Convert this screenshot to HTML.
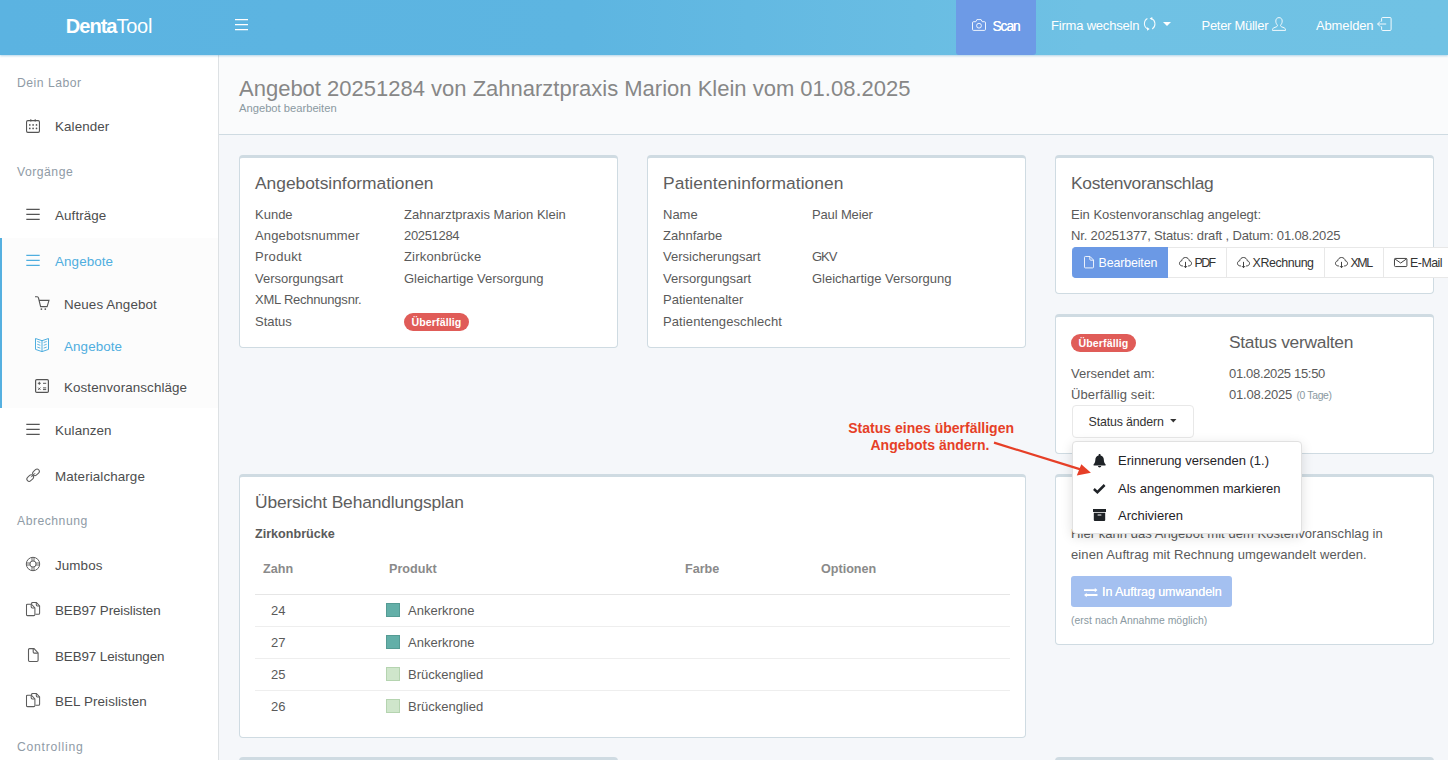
<!DOCTYPE html>
<html lang="de">
<head>
<meta charset="utf-8">
<title>DentaTool – Angebot 20251284</title>
<style>
*{box-sizing:border-box;margin:0;padding:0}
html,body{width:1448px;height:760px;overflow:hidden}
body{font-family:"Liberation Sans",sans-serif;font-size:13px;line-height:21.4px;color:#5a5a5a;background:#f5f7fa;position:relative}
svg{display:block;overflow:visible}
.abs{position:absolute}
/* ---------- top bar ---------- */
#top{position:absolute;left:0;top:0;width:1448px;height:55px;background:linear-gradient(to right,#5bb3e1 0%,#5db5e1 40%,#6fc1e4 75%,#70c2e4 100%);box-shadow:0 1px 2px rgba(70,150,200,.4);z-index:20;color:#fff}
#brand{position:absolute;left:0;top:0;width:218px;height:55px;text-align:center;font-size:20px;line-height:53px;letter-spacing:-.25px;white-space:nowrap}
#brand b{font-weight:700;letter-spacing:-1px}
#scan{position:absolute;left:956px;top:0;width:80px;height:55px;background:#6d9ae6;border-radius:0 0 3px 3px}
.tn{position:absolute;top:0;height:55px;line-height:51px;font-size:13px;white-space:nowrap;color:#fff}
#top svg{position:absolute}
/* ---------- sidebar ---------- */
#side{position:absolute;left:0;top:55px;width:219px;height:705px;background:#fff;border-right:1px solid #dde1e4;z-index:10}
.sh{position:absolute;left:17px;font-size:12.2px;color:#8f9ba6;letter-spacing:.5px;line-height:20px;height:20px;white-space:nowrap}
.si{position:absolute;left:0;width:218px;height:22px;line-height:22px;color:#4c4d4e;font-size:13.4px;letter-spacing:.1px;white-space:nowrap}
.si span{position:absolute;left:55px;top:0}
.si.sub span{left:64px}
.si svg{position:absolute;left:26px;top:2px}
.si.sub svg{left:35px}
.si.on{color:#4faedf}
#actbg{position:absolute;left:0;top:183px;width:218px;height:170px;background:#fcfcfc;border-left:2px solid #55b0e0}
/* ---------- main ---------- */
#head{position:absolute;left:219px;top:55px;width:1229px;height:80px;background:#fafbfc;border-bottom:1px solid #cfdbe2}
#head h1{position:absolute;left:20px;top:16px;font-size:22px;line-height:36px;font-weight:400;color:#878787;white-space:nowrap}
#head small{position:absolute;left:20px;top:43.5px;font-size:11.2px;line-height:18px;color:#8a99a1;white-space:nowrap}
.card{position:absolute;background:#fff;border:1px solid #cfdbe2;border-top-width:3px;border-radius:4px}
.ct{position:absolute;left:15px;font-size:17.4px;line-height:26px;color:#5e5e5e;white-space:nowrap;letter-spacing:-.1px}
.row{position:absolute;left:15px;white-space:nowrap;height:21.4px;line-height:21.4px}
.row i{font-style:normal;position:absolute;left:149px;top:0}
.badge{display:inline-block;background:#e05c58;color:#fff;font-weight:700;font-size:10.6px;line-height:18px;height:18px;border-radius:9px;padding:0 7.5px;letter-spacing:.1px;vertical-align:top}
/* buttons */
.bg{position:absolute;left:16px;top:89px;height:31px;display:flex;white-space:nowrap}
.btn{height:31px;line-height:31px;font-size:12.4px;border:1px solid #e8e8e8;border-left-width:0;background:#fff;color:#333;position:relative;white-space:nowrap}
.btn svg{position:absolute}
.btn.pri{background:#6b99e5;border-color:#6b99e5;color:#fff;border-radius:4px 0 0 4px}
.tcol{position:absolute;left:173px;white-space:nowrap;height:21.4px;line-height:21.4px}
.tcol small{font-size:10.4px;color:#8a99a1;letter-spacing:-.35px;margin-left:1px}
#dd{position:absolute;left:1072px;top:441px;width:230px;height:93px;background:#fff;border:1px solid #e1e1e1;border-radius:4px;box-shadow:0 3px 12px rgba(0,0,0,.13);z-index:30;color:#212529}
#dd div{position:absolute;left:45px;font-size:13px;line-height:22px;height:22px;white-space:nowrap;color:#1f2327}
#dd svg{position:absolute;left:20px}
#note{position:absolute;left:799px;top:419.5px;width:215px;text-align:right;font-weight:700;font-size:14px;line-height:17px;color:#e63f27;z-index:31;white-space:nowrap}
#arrow{position:absolute;left:980px;top:430px;z-index:32}
.th{position:absolute;font-weight:700;color:#8a8a8a;top:82.4px;font-size:12.6px;white-space:nowrap;line-height:21.4px}
.tr{position:absolute;left:15px;width:755px;height:32px;border-top:1px solid #eee;line-height:31px}
.tr b{font-weight:400;position:absolute;left:16px}
.tr i{font-style:normal;position:absolute;left:153px}
.tr u{position:absolute;left:131px;top:8px;width:14px;height:14px;display:block;text-decoration:none}
</style>
</head>
<body>

<!-- ================= TOP BAR ================= -->
<div id="top">
  <div id="brand"><b>Denta</b>Tool</div>
  <svg style="left:235px;top:19px" width="13" height="12" viewBox="0 0 13 12"><path d="M0 .6h13M0 5.6h13M0 10.6h13" stroke="#fff" stroke-width="1.15" fill="none"/></svg>
  <div id="scan"></div>
  <!-- camera -->
  <svg style="left:972px;top:19px" width="14" height="12" viewBox="0 0 14 12" fill="none" stroke="#fff" stroke-opacity=".88" stroke-width="1"><path d="M1.6 2.7H3.8L4.9.6H9.1L10.2 2.7H12.4Q13.5 2.7 13.5 3.8V10.3Q13.5 11.4 12.4 11.4H1.6Q.5 11.4.5 10.3V3.8Q.5 2.7 1.6 2.7Z"/><circle cx="7" cy="6.7" r="2.4"/></svg>
  <div class="tn" style="left:992.5px;font-size:13.8px;letter-spacing:-1.1px;line-height:53px;text-shadow:0 0 .5px #fff">Scan</div>
  <div class="tn" style="left:1051px;letter-spacing:-.2px">Firma wechseln</div>
  <!-- sync -->
  <svg style="left:1143px;top:16px" width="14" height="16" viewBox="0 0 14 16" fill="none" stroke="#fff" stroke-opacity=".92" stroke-width="1.05"><path d="M4.4 2.5A5.9 5.9 0 0 0 4.9 13"/><path d="M9.2 13A5.9 5.9 0 0 0 8.4 2.6"/><path d="M4 11.3L6.700000000000001 13.1 4.1 14.7Z" fill="#fff" stroke="none"/><path d="M9.3 .9L6.6 2.4 9.2 4.1Z" fill="#fff" stroke="none"/></svg>
  <svg style="left:1163px;top:22px" width="8" height="4" viewBox="0 0 8 4"><path d="M0 0h8L4 4z" fill="#fff"/></svg>
  <div class="tn" style="left:1201.5px;letter-spacing:-.28px">Peter Müller</div>
  <!-- user -->
  <svg style="left:1272px;top:17px" width="14" height="14" viewBox="0 0 14 14" fill="none" stroke="#fff" stroke-opacity=".9" stroke-width="1"><path d="M7 .6C9 .6 10.2 2.1 10.2 4.1 10.2 6 9.3 7.4 8.6 8 8.4 8.9 8.7 9.4 9.6 9.8L12.3 10.9C13.2 11.3 13.5 11.9 13.5 12.7V13.4H.5V12.7C.5 11.9.8 11.3 1.7 10.9L4.4 9.8C5.3 9.4 5.6 8.9 5.4 8 4.7 7.4 3.8 6 3.8 4.1 3.8 2.1 5 .6 7 .6Z"/></svg>
  <div class="tn" style="left:1316px;letter-spacing:-.14px">Abmelden</div>
  <!-- logout -->
  <svg style="left:1377px;top:17px" width="15" height="14" viewBox="0 0 15 14" fill="none" stroke="#fff" stroke-opacity=".9" stroke-width="1"><path d="M4.6 4.6V1.6Q4.6.5 5.7.5H13Q14.1.5 14.1 1.6V12.4Q14.1 13.5 13 13.5H5.7Q4.6 13.5 4.6 12.4V9.4"/><path d="M.6 7H9.2M3.2 4.4L.6 7 3.2 9.6"/></svg>
</div>

<!-- ================= SIDEBAR ================= -->
<div id="side">
  <div id="actbg"></div>
  <div class="sh" style="top:17.5px">Dein Labor</div>
  <div class="si" style="top:61px">
    <svg style="top:2.6px" width="14" height="14" viewBox="0 0 14 14" fill="none" stroke="#555" stroke-width="1.1"><rect x=".55" y="1.6" width="12.9" height="11.8" rx="1.3"/><path d="M4.8 .2V2.4M9.2 .2V2.4"/><g fill="#555" stroke="none"><circle cx="3.8" cy="5.9" r=".85"/><circle cx="7.1" cy="5.9" r=".85"/><circle cx="10.5" cy="5.9" r=".85"/><circle cx="3.8" cy="9.4" r=".85"/><circle cx="7.1" cy="9.4" r=".85"/><circle cx="10.5" cy="9.4" r=".85"/></g></svg>
    <span>Kalender</span></div>
  <div class="sh" style="top:107px">Vorgänge</div>
  <div class="si" style="top:150px">
    <svg width="14" height="14" viewBox="0 0 14 14"><path d="M.3 2.4H13.7M.3 7.4H13.7M.3 12.3H13.7" stroke="#555" stroke-width="1.25" fill="none"/></svg>
    <span>Aufträge</span></div>
  <div class="si on" style="top:196px">
    <svg width="14" height="14" viewBox="0 0 14 14"><path d="M.3 2.4H13.7M.3 7.4H13.7M.3 12.3H13.7" stroke="#4faedf" stroke-width="1.25" fill="none"/></svg>
    <span>Angebote</span></div>
  <div class="si sub" style="top:239px">
    <svg width="14" height="14" viewBox="0 0 14 14" fill="none" stroke="#555" stroke-width="1.1"><path d="M0 .8H2.2Q3.2.8 3.5 2L5.6 10.6H12.1L14 4.4H4.1"/><g fill="#555" stroke="none"><circle cx="6.4" cy="13.1" r=".9"/><circle cx="10.3" cy="13.1" r=".9"/></g></svg>
    <span>Neues Angebot</span></div>
  <div class="si sub on" style="top:281px">
    <svg width="14" height="14" viewBox="0 0 14 14" fill="none" stroke="#4faedf" stroke-width="1"><path d="M.5 .5L7 2.7 13.5 .5V11.4L7 13.6 .5 11.4ZM7 2.7V13.6"/><path d="M2.3 3.5L5.3 4.5M2.3 6.3L5.3 7.3M2.3 9.1L5.3 10.1M11.7 3.5L8.7 4.5M11.7 6.3L8.7 7.3M11.7 9.1L8.7 10.1" stroke-width=".9"/></svg>
    <span>Angebote</span></div>
  <div class="si sub" style="top:322px">
    <svg width="14" height="14" viewBox="0 0 14 14" fill="none" stroke="#555" stroke-width="1.2"><rect x=".6" y=".6" width="12.8" height="12.8" rx="1.2"/><path d="M2.8 4.3H5.8M4.3 2.8V5.8M8 4.3H11.2M3.2 8.6L5.4 10.8M5.4 8.6L3.2 10.8M8 8.9H11.2M8 10.6H11.2" stroke-width="1"/></svg>
    <span>Kostenvoranschläge</span></div>
  <div class="si" style="top:365px">
    <svg width="14" height="14" viewBox="0 0 14 14"><path d="M.3 2.4H13.7M.3 7.4H13.7M.3 12.3H13.7" stroke="#555" stroke-width="1.25" fill="none"/></svg>
    <span>Kulanzen</span></div>
  <div class="si" style="top:411px">
    <svg width="14" height="14" viewBox="0 0 14 14" fill="none" stroke="#5c5c5c" stroke-width="1"><rect x="-3.7" y="-2.3" width="7.4" height="4.6" rx="2.3" transform="translate(10 4.3) rotate(-43)"/><rect x="-3.7" y="-2.3" width="7.4" height="4.6" rx="2.3" transform="translate(4.2 10.1) rotate(-43)"/><path d="M5.1 9.2L9.1 5.2"/></svg>
    <span>Materialcharge</span></div>
  <div class="sh" style="top:455.5px">Abrechnung</div>
  <div class="si" style="top:500px">
    <svg width="14" height="14" viewBox="0 0 14 14" fill="none" stroke="#5c5c5c" stroke-width="1"><circle cx="7" cy="7" r="6.7"/><circle cx="7" cy="7" r="3.1"/><path d="M6 .6V4.1M8 .6V4.1M6 9.9V13.4M8 9.9V13.4M.6 6H4.1M.6 8H4.1M9.9 6H13.4M9.9 8H13.4" stroke-width=".9"/></svg>
    <span>Jumbos</span></div>
  <div class="si" style="top:545px">
    <svg width="14" height="14" viewBox="0 0 14 14" fill="none" stroke="#5c5c5c" stroke-width="1.05"><path d="M5.6 1.9V1.4Q5.6 .5 6.5 .5H10.4L13.6 3.9V11.2Q13.6 12.2 12.6 12.2H9.4"/><path d="M10.3 .7V2.8Q10.3 3.9 11.4 3.9H13.4"/><path d="M1.5 2.2H5.4L8.9 5.9V12.5Q8.9 13.6 7.8 13.6H1.5Q.5 13.6 .5 12.5V3.3Q.5 2.2 1.5 2.2Z" fill="#fff"/><path d="M5.2 2.4V4.8Q5.2 5.9 6.3 5.9H8.7"/></svg>
    <span style="letter-spacing:-.1px">BEB97 Preislisten</span></div>
  <div class="si" style="top:591px">
    <svg width="14" height="14" viewBox="0 0 14 14" fill="none" stroke="#5c5c5c" stroke-width="1.1"><path d="M3.6 .6H8L12.1 4.9V12.3Q12.1 13.5 10.9 13.5H3.6Q2.5 13.5 2.5 12.3V1.8Q2.5 .6 3.6 .6Z"/><path d="M7.2 .8V3.9Q7.2 5.1 8.4 5.1H11.9"/></svg>
    <span style="letter-spacing:-.1px">BEB97 Leistungen</span></div>
  <div class="si" style="top:636px">
    <svg width="14" height="14" viewBox="0 0 14 14" fill="none" stroke="#5c5c5c" stroke-width="1.05"><path d="M5.6 1.9V1.4Q5.6 .5 6.5 .5H10.4L13.6 3.9V11.2Q13.6 12.2 12.6 12.2H9.4"/><path d="M10.3 .7V2.8Q10.3 3.9 11.4 3.9H13.4"/><path d="M1.5 2.2H5.4L8.9 5.9V12.5Q8.9 13.6 7.8 13.6H1.5Q.5 13.6 .5 12.5V3.3Q.5 2.2 1.5 2.2Z" fill="#fff"/><path d="M5.2 2.4V4.8Q5.2 5.9 6.3 5.9H8.7"/></svg>
    <span>BEL Preislisten</span></div>
  <div class="sh" style="top:681.5px;letter-spacing:.75px">Controlling</div>
</div>

<!-- ================= PAGE HEADING ================= -->
<div id="head">
  <h1>Angebot 20251284 von Zahnarztpraxis Marion Klein vom 01.08.2025</h1>
  <small>Angebot bearbeiten</small>
</div>

<!-- ================= CARD 1 ================= -->
<div class="card" id="c1" style="left:239px;top:155px;width:379px;height:193px">
  <div class="ct" style="top:11.6px;letter-spacing:-.02px">Angebotsinformationen</div>
  <div class="row" style="top:45.6px">Kunde<i>Zahnarztpraxis Marion Klein</i></div>
  <div class="row" style="top:67px"><span style="letter-spacing:.15px">Angebotsnummer</span><i style="letter-spacing:-.33px">20251284</i></div>
  <div class="row" style="top:88.4px"><span style="letter-spacing:.3px">Produkt</span><i style="letter-spacing:.18px">Zirkonbrücke</i></div>
  <div class="row" style="top:109.8px">Versorgungsart<i>Gleichartige Versorgung</i></div>
  <div class="row" style="top:131.2px;letter-spacing:-.23px">XML Rechnungsnr.</div>
  <div class="row" style="top:152.6px">Status<i><span class="badge" style="margin-top:2px">Überfällig</span></i></div>
</div>

<!-- ================= CARD 2 ================= -->
<div class="card" id="c2" style="left:647px;top:155px;width:379px;height:193px">
  <div class="ct" style="top:11.6px;letter-spacing:.08px">Patienteninformationen</div>
  <div class="row" style="top:45.6px">Name<i style="letter-spacing:-.15px">Paul Meier</i></div>
  <div class="row" style="top:67px">Zahnfarbe</div>
  <div class="row" style="top:88.4px">Versicherungsart<i style="letter-spacing:-1px">GKV</i></div>
  <div class="row" style="top:109.8px">Versorgungsart<i>Gleichartige Versorgung</i></div>
  <div class="row" style="top:131.2px">Patientenalter</div>
  <div class="row" style="top:152.6px;letter-spacing:.1px">Patientengeschlecht</div>
</div>

<!-- ================= CARD 3 : Kostenvoranschlag ================= -->
<div class="card" id="c3" style="left:1055px;top:155px;width:379px;height:139px">
  <div class="ct" style="top:11.6px;left:15px;letter-spacing:-.32px">Kostenvoranschlag</div>
  <div class="row" style="top:45.6px;left:15px">Ein Kostenvoranschlag angelegt:</div>
  <div class="row" style="top:67px;left:15px;letter-spacing:-.16px">Nr. 20251377, Status: draft , Datum: 01.08.2025</div>
  <div class="bg">
    <div class="btn pri" style="width:96px;padding-left:26.5px;letter-spacing:-.12px">
      <svg style="left:11.5px;top:8px" width="10.5" height="12.4" viewBox="0 0 11 13" fill="none" stroke="#fff" stroke-opacity=".92" stroke-width="1"><path d="M1.5 .5H6.3L10 4.2V11.5Q10 12.5 9 12.5H1.5Q.5 12.5 .5 11.5V1.5Q.5 .5 1.5 .5Z"/><path d="M6.1 .7V3.4Q6.1 4.4 7.1 4.4H9.8"/></svg>
      Bearbeiten</div>
    <div class="btn" style="width:59px;padding-left:26.5px;letter-spacing:-1.55px">
      <svg style="left:10.5px;top:8.6px" width="13" height="11.2" viewBox="0 0 14 12" fill="none" stroke="#333" stroke-width="1"><path d="M4.3 9.6H3.6C1.9 9.6 .5 8.4 .5 6.8 .5 5.4 1.5 4.3 2.9 4.1 3.2 2 4.9 .5 7 .5 9.100000000000001 .5 10.8 2 11.1 4.1 12.5 4.3 13.5 5.4 13.5 6.8 13.5 8.4 12.1 9.6 10.4 9.6H9.7"/><path d="M7 5.2V11.3M5.2 9.7L7 11.5 8.8 9.7"/></svg>
      PDF</div>
    <div class="btn" style="width:98px;padding-left:25.6px;letter-spacing:-.42px">
      <svg style="left:9.5px;top:8.6px" width="13" height="11.2" viewBox="0 0 14 12" fill="none" stroke="#333" stroke-width="1"><path d="M4.3 9.6H3.6C1.9 9.6 .5 8.4 .5 6.8 .5 5.4 1.5 4.3 2.9 4.1 3.2 2 4.9 .5 7 .5 9.100000000000001 .5 10.8 2 11.1 4.1 12.5 4.3 13.5 5.4 13.5 6.8 13.5 8.4 12.1 9.6 10.4 9.6H9.7"/><path d="M7 5.2V11.3M5.2 9.7L7 11.5 8.8 9.7"/></svg>
      XRechnung</div>
    <div class="btn" style="width:59px;padding-left:25.6px;letter-spacing:-1.5px">
      <svg style="left:9.5px;top:8.6px" width="13" height="11.2" viewBox="0 0 14 12" fill="none" stroke="#333" stroke-width="1"><path d="M4.3 9.6H3.6C1.9 9.6 .5 8.4 .5 6.8 .5 5.4 1.5 4.3 2.9 4.1 3.2 2 4.9 .5 7 .5 9.100000000000001 .5 10.8 2 11.1 4.1 12.5 4.3 13.5 5.4 13.5 6.8 13.5 8.4 12.1 9.6 10.4 9.6H9.7"/><path d="M7 5.2V11.3M5.2 9.7L7 11.5 8.8 9.7"/></svg>
      XML</div>
    <div class="btn" style="width:75px;padding-left:26px;letter-spacing:-.5px">
      <svg style="left:10px;top:10px" width="13.4" height="9" viewBox="0 0 14 10" preserveAspectRatio="none" fill="none" stroke="#333" stroke-width="1"><rect x=".5" y=".5" width="13" height="9" rx="1"/><path d="M.9 1L7 5.6 13.1 1"/></svg>
      E-Mail</div>
  </div>
</div>

<!-- ================= CARD 4 : Status verwalten ================= -->
<div class="card" id="c4" style="left:1055px;top:314px;width:379px;height:140px">
  <div class="row" style="top:17px;left:15px"><span class="badge">Überfällig</span></div>
  <div class="ct" style="top:11.6px;left:173px;letter-spacing:-.28px">Status verwalten</div>
  <div class="row" style="top:45.6px;left:15px">Versendet am:</div>
  <div class="tcol" style="top:45.6px;letter-spacing:-.33px">01.08.2025 15:50</div>
  <div class="row" style="top:67px;left:15px;letter-spacing:.12px">Überfällig seit:</div>
  <div class="tcol" style="top:67px;letter-spacing:-.2px">01.08.2025 <small>(0 Tage)</small></div>
  <div class="abs" style="left:16px;top:88px;width:122px;height:33px;border:1px solid #e8e8e8;border-radius:4px;background:#fff;color:#333;line-height:33.5px;padding-left:15.6px;font-size:12.4px;letter-spacing:-.15px;white-space:nowrap">Status ändern
    <svg class="abs" style="left:97.4px;top:13.2px" width="6.6" height="3.6" viewBox="0 0 7 4"><path d="M0 0h7L3.5 4z" fill="#333"/></svg>
  </div>
</div>

<!-- ================= CARD 5 : In Auftrag umwandeln ================= -->
<div class="card" id="c5" style="left:1055px;top:474px;width:379px;height:171px">
  <div class="row" style="top:46.1px;left:15px;letter-spacing:.05px">Hier kann das Angebot mit dem Kostenvoranschlag in</div>
  <div class="row" style="top:67.4px;left:15px;letter-spacing:.1px">einen Auftrag mit Rechnung umgewandelt werden.</div>
  <div class="abs" style="left:15px;top:99px;width:161px;height:31px;border-radius:3px;background:#a4c0f0;color:#fff;line-height:33.4px;padding-left:31px;font-size:12.6px;letter-spacing:-.11px;white-space:nowrap;text-shadow:0 0 .4px #fff">
    <svg class="abs" style="left:13px;top:11.7px" width="13.5" height="9.2" viewBox="0 0 13.5 9.2" fill="#fff"><path d="M0 1.2H10.8V0L13.5 2.1 10.8 4.2V3.1H0Z"/><path d="M13.5 6.1H2.7V5L0 7.1 2.7 9.2V8H13.5Z"/></svg>
    In Auftrag umwandeln</div>
  <div class="abs" style="left:15px;top:132.5px;font-size:10.4px;letter-spacing:.04px;color:#8a99a1;white-space:nowrap">(erst nach Annahme möglich)</div>
</div>

<!-- ================= CARD 6 : Behandlungsplan ================= -->
<div class="card" id="c6" style="left:239px;top:474px;width:787px;height:264px">
  <div class="ct" style="top:12px;letter-spacing:-.16px">Übersicht Behandlungsplan</div>
  <div class="row" style="top:47px;font-weight:700;font-size:12.6px">Zirkonbrücke</div>
  <div class="th" style="left:23px">Zahn</div>
  <div class="th" style="left:149px">Produkt</div>
  <div class="th" style="left:445px">Farbe</div>
  <div class="th" style="left:581px">Optionen</div>
  <div class="tr" style="top:117px;border-top:1px solid #e6e6e6;height:32px"><b>24</b><u style="background:#63afa8;border:1px solid #559b94"></u><i>Ankerkrone</i></div>
  <div class="tr" style="top:149px"><b>27</b><u style="background:#63afa8;border:1px solid #559b94"></u><i>Ankerkrone</i></div>
  <div class="tr" style="top:181px"><b>25</b><u style="background:#cfe6cb;border:1px solid #b5d4b0"></u><i>Brückenglied</i></div>
  <div class="tr" style="top:213px"><b>26</b><u style="background:#cfe6cb;border:1px solid #b5d4b0"></u><i>Brückenglied</i></div>
</div>

<!-- bottom partial cards -->
<div class="card" style="left:239px;top:757px;width:379px;height:60px"></div>
<div class="card" style="left:1055px;top:757px;width:379px;height:60px"></div>

<!-- ================= DROPDOWN ================= -->
<div id="dd">
  <svg style="top:12px;left:19.9px" width="13.2" height="13.4" viewBox="0 0 13 13" preserveAspectRatio="none" fill="#1f2327"><path d="M6.5 0C7.1 0 7.5 .4 7.5 1V1.4C9.5 1.9 10.7 3.5 10.7 5.6 10.7 8 11.4 9 12.3 9.9 12.8 10.4 12.5 11.2 11.8 11.2H1.2C.5 11.2 .2 10.4 .7 9.9 1.6 9 2.3 8 2.3 5.6 2.3 3.5 3.5 1.9 5.5 1.4V1C5.5 .4 5.9 0 6.500000000000001 0ZM4.9 11.6H8.1C8.1 12.5 7.4 13 6.5 13 5.6 13 4.9 12.5 4.9 11.6Z"/></svg>
  <div style="top:8px">Erinnerung versenden (1.)</div>
  <svg style="top:41.6px;left:20.3px" width="13" height="10" viewBox="0 0 13 10" fill="none" stroke="#1f2327" stroke-width="2.5" stroke-linejoin="miter"><path d="M.9 5L4.4 8.2 11.6 1"/></svg>
  <div style="top:35.5px">Als angenommen markieren</div>
  <svg style="top:67.2px" width="13" height="12" viewBox="0 0 13 12" fill="#1f2327"><path d="M0 0H13V3H0ZM.8 3.8H12.2V11Q12.2 12 11.2 12H1.8Q.8 12 .8 11ZM4.9 5.4Q4.6 5.4 4.6 5.7V6.3Q4.6 6.6 4.9 6.6H8.1Q8.4 6.6 8.4 6.3V5.7Q8.4 5.4 8.1 5.4Z" fill-rule="evenodd"/></svg>
  <div style="top:63px">Archivieren</div>
</div>

<!-- ================= ANNOTATION ================= -->
<div id="note">Status eines überfälligen<br><span style="margin-right:24.5px">Angebots ändern.</span></div>
<svg id="arrow" width="120" height="50" viewBox="0 0 120 50"><path d="M14 12.6 L100.5 39.4" stroke="#e63f27" stroke-width="2.2" fill="none"/><path d="M110.9 42.7 L96.8 45.6 L101.3 34.2z" fill="#e63f27"/></svg>

</body>
</html>
